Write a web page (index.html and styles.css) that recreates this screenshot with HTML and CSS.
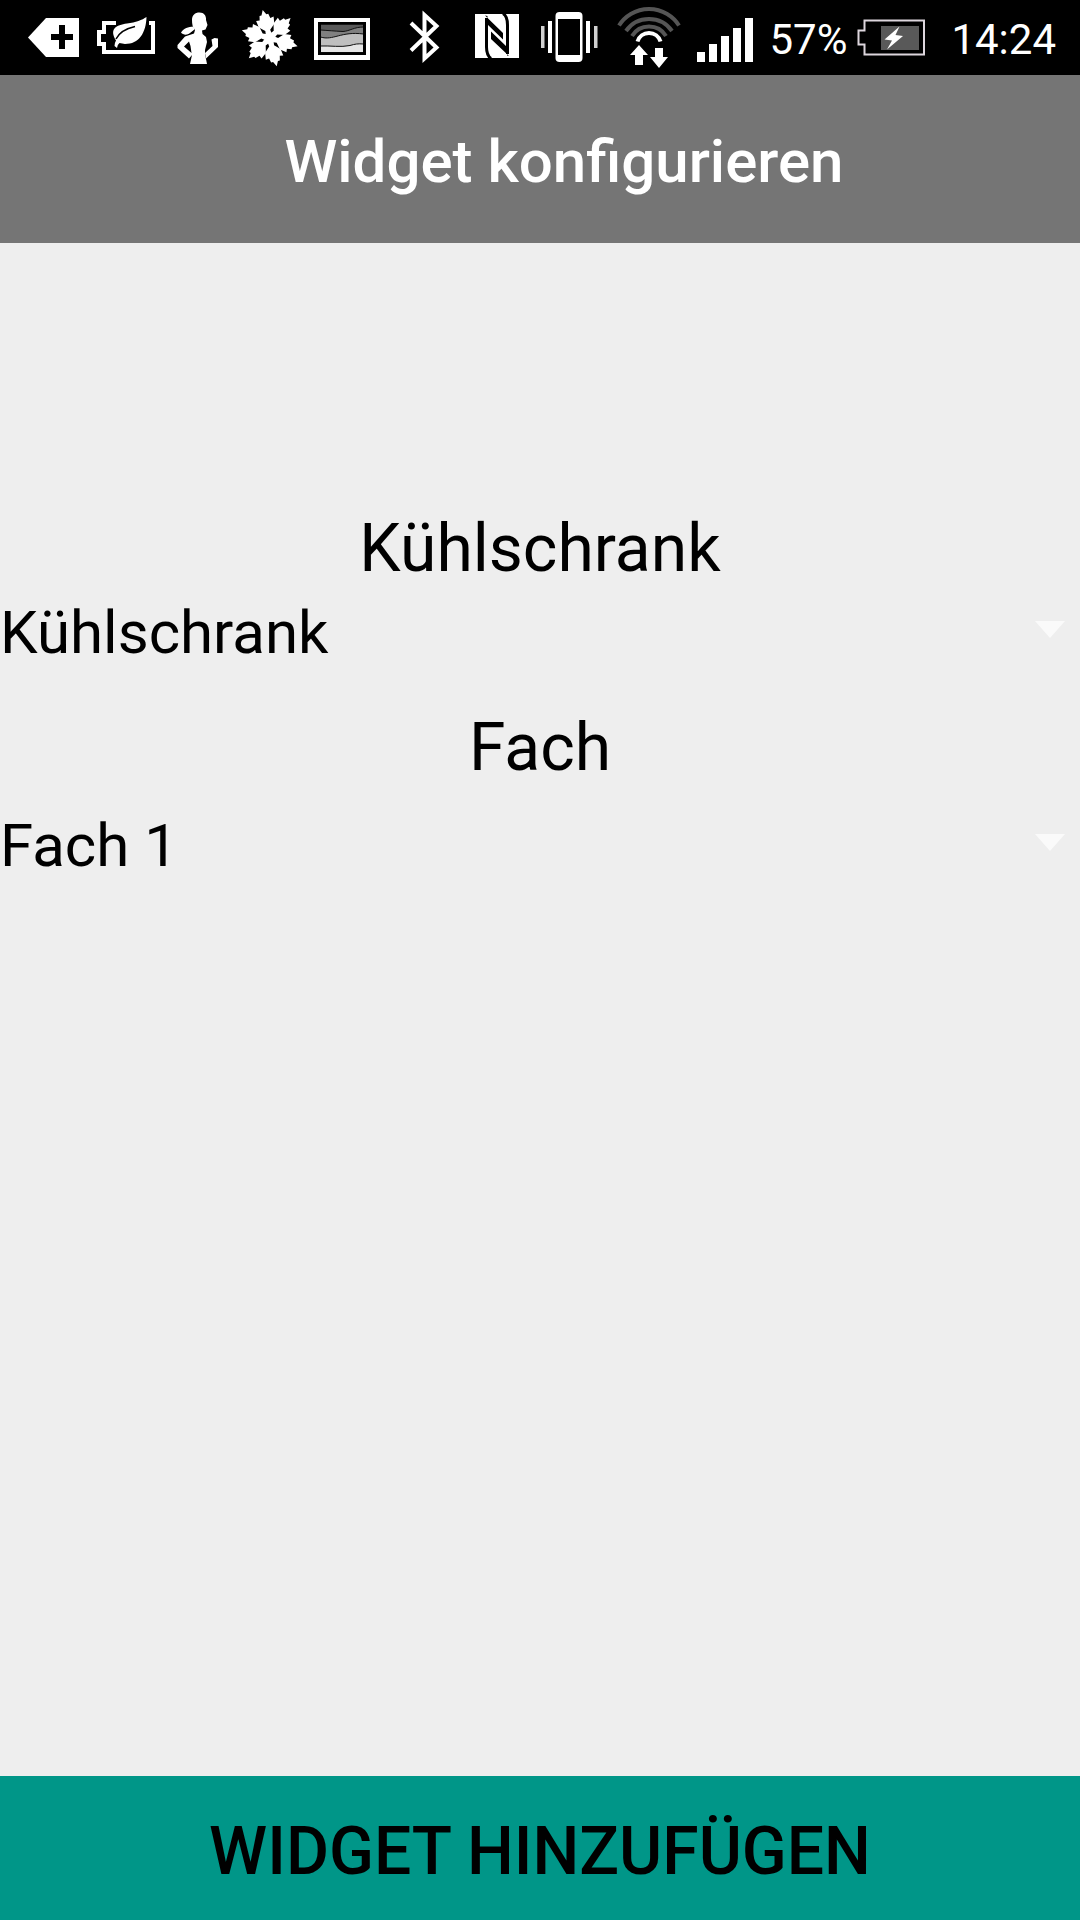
FILE: index.html
```html
<!DOCTYPE html>
<html lang="de">
<head>
<meta charset="utf-8">
<meta name="viewport" content="width=device-width, initial-scale=1">
<title>Widget konfigurieren</title>
<link rel="stylesheet" href="styles.css">
</head>
<body>
<div class="status-bar">
  <div class="status-group">
    <svg class="status-icon" viewBox="18 0 72 75" aria-hidden="true">
      <path fill="#fff" d="M28 37.5 46 18H79V57H46Z"/>
      <path fill="#000" d="M59 25h6v9h8v6h-8v9h-6v-9h-8v-6h8z"/>
    </svg>
    <svg class="status-icon" viewBox="90 0 72 75" aria-hidden="true">
      <path fill="none" stroke="#fff" stroke-width="4" d="M116 23H104V32H99V44H104V52H153V23H149"/>
      <path fill="#fff" d="M146.500 17C146 33 139 44 125 44L119.500 43Q117 45 117 48L114.500 46Q114.500 43 116 40.500C109 29 116 25 127 23.500C136 22.500 142 20 146.500 17Z"/>
      <path fill="none" stroke="#000" stroke-width="1.500" d="M116 39C119 33 124 29 135 26.500"/>
    </svg>
    <svg class="status-icon" viewBox="162 0 72 75" aria-hidden="true">
      <path fill="#fff" d="M192 20C192 15 195 12.500 199.500 12.500C204 12.500 206.500 16 206 20L207.500 25L205.500 29.500L202 30.500L202.500 34L206 37L207 42L205 50V54L207 64H190L192 55L189 58.500L177.500 48V45L185 36.500L194 33.500L195 30C192.500 27 192 24 192 20ZM189 41.500 184 46.500 191.500 53 190.500 46Z"/>
      <path fill="#fff" d="M193.500 26.500C188 27 184 28 181 32.500C183 35 187 35.500 190 33L194.500 29.500ZM205 53L212.500 46L211.500 39.500L214.500 38L218 38.500V47L206 58.500Z"/>
    </svg>
    <svg class="status-icon" viewBox="234 0 72 75" aria-hidden="true">
      <defs>
        <path id="arm" d="M-3.500 0-2.500-8-8-13-9-20-5.500-19.500-4.500-24-2.500-24 0-29 2.500-24 4.500-24 5.500-19.500 9-20 8-13 2.500-8 3.500 0Z"/>
      </defs>
      <g fill="#fff" transform="translate(269.700 38.200) rotate(-14)">
        <use href="#arm"/>
        <use href="#arm" transform="rotate(60)"/>
        <use href="#arm" transform="rotate(120)"/>
        <use href="#arm" transform="rotate(180)"/>
        <use href="#arm" transform="rotate(240)"/>
        <use href="#arm" transform="rotate(300)"/>
      </g>
    </svg>
    <svg class="status-icon" viewBox="306 0 72 75" aria-hidden="true">
      <path fill="#fff" d="M314 18H370V60H314Z"/>
      <path fill="#000" d="M318 22H366V55H318Z"/>
      <path fill="#595959" d="M320.500 24.500H363.500V52.500H320.500Z"/>
      <path fill="#808080" stroke="#111" d="M320.500 30C328 30.500 334 31 343 31.500C350 31 354 27 363.500 27V52.500H320.500Z"/>
      <path fill="#bfbfbf" stroke="#111" d="M320.500 37C333 41 341 31 363.500 34V52.500H320.500Z"/>
      <path fill="#e6e6e6" stroke="#111" d="M320.500 46C330 45.500 341 47.500 350 45.500C355 44 358 43.500 363.500 44V52.500H320.500Z"/>
      <path fill="none" stroke="#000" stroke-width="2" d="M320 23.500H364V53.500H320Z"/>
    </svg>
  </div>
  <div class="status-group">
    <svg class="status-icon" viewBox="387 0 72 75" aria-hidden="true">
      <path fill="none" stroke="#fff" stroke-width="4" d="M410 23 435.500 47.500 423.500 58.500V15L435.500 26 410 50.500"/>
    </svg>
    <svg class="status-icon" viewBox="459 0 72 75" aria-hidden="true">
      <path fill="#fff" d="M474 14H518V58H474Z"/>
      <path fill="#000" d="M484 15.500 502 33V39.500L486.500 24.500V16ZM490 31.500 506 47V55.500L508 56 490 39Z"/>
      <path fill="none" stroke="#000" stroke-width="3" d="M490 58.500C486.500 56 485.500 52 485.500 47V18M506.500 54V25C506.500 19 505.500 15.500 502 13.500"/>
    </svg>
    <svg class="status-icon" viewBox="531 0 72 75" aria-hidden="true">
      <rect x="554.500" y="12" width="27" height="50" rx="4" fill="#fff"/>
      <path fill="#000" d="M557 19H579V55H557Z"/>
      <path fill="#fff" d="M547 21h4v32h-4zM585 21h4v32h-4z"/>
      <path fill="#d0d0d0" d="M540 26h3.500v22h-3.500zM593 26h3.500v22h-3.500z"/>
    </svg>
    <svg class="status-icon status-icon-wide" viewBox="603 0 80 75" aria-hidden="true">
      <g fill="none" stroke-width="4">
        <path stroke="#555" d="M618 25.500A35.500 35.500 0 0 1 678 25.500M625 31A28 28 0 0 1 671 31M631 36A20 20 0 0 1 665 36"/>
        <path stroke="#fff" d="M636.500 41.500A12 12 0 0 1 659.500 41.500"/>
      </g>
      <path fill="#fff" d="M638 45 647 55H642V65H634V55H629ZM654 48H662V57H667L658 68 649 57H654Z"/>
    </svg>
    <svg class="status-icon status-icon-wide" viewBox="683 0 80 75" aria-hidden="true">
      <path fill="#fff" d="M696 52h8v10h-8zM708 44h8v18h-8zM720 36h8v26h-8zM732 28h8v34h-8zM744 18h8v44h-8z"/>
    </svg>
    <span class="battery-level">57%</span>
    <svg class="status-icon status-icon-wide" viewBox="852 0 80 75" aria-hidden="true">
      <path fill="none" stroke="#ddd6dd" stroke-width="2" d="M864.500 20.500H924V54.500H864.500V44.500H858.500V30.500H864.500Z"/>
      <path fill="#595959" d="M881 26H919V50H881Z"/>
      <path fill="#fff" d="M899.500 26.500 884.500 39.500 892 40.500 887 49.500 903 36 895.500 35Z"/>
    </svg>
    <time class="clock">14:24</time>
  </div>
</div>

<header class="app-bar">
  <h1 class="app-title">Widget konfigurieren</h1>
</header>

<form class="config-form">
  <div class="fields">
    <label class="field-label" for="fridge">Kühlschrank</label>
    <div class="spinner">
      <select class="spinner-select" id="fridge"><option>Kühlschrank</option></select>
      <svg class="spinner-arrow" viewBox="0 0 30 17" aria-hidden="true"><path fill="#fafafa" d="M0 0H30L15 17Z"/></svg>
    </div>
    <label class="field-label field-label-next" for="compartment">Fach</label>
    <div class="spinner spinner-spaced">
      <select class="spinner-select" id="compartment"><option>Fach 1</option></select>
      <svg class="spinner-arrow" viewBox="0 0 30 17" aria-hidden="true"><path fill="#fafafa" d="M0 0H30L15 17Z"/></svg>
    </div>
  </div>
  <button class="submit" type="button">WIDGET HINZUFÜGEN</button>
</form>
</body>
</html>
```
FILE: styles.css
```css
* {
  box-sizing: border-box;
}

body {
  display: flex;
  flex-direction: column;
  min-height: 100vh;
  margin: 0;
  background: #eee;
  color: #000;
  font-family: Roboto, "Liberation Sans", sans-serif;
}

.status-bar {
  display: flex;
  justify-content: space-between;
  padding: 0 24px 0 18px;
  background: #000;
  color: #fff;
  font-size: 42px;
  line-height: 79px;
}

.status-group {
  display: flex;
  height: 75px;
}

.status-icon {
  flex: none;
  width: 72px;
  height: 75px;
}

.status-icon-wide {
  width: 80px;
}

.battery-level {
  padding: 0 5px;
}

.clock {
  padding-left: 19px;
}

.app-bar {
  padding: 51px 0 45px 48px;
  background: #757575;
  color: #fff;
}

.app-title {
  margin: 0;
  font-size: 60px;
  font-weight: 500;
  line-height: 72px;
  text-align: center;
}

.config-form {
  display: flex;
  flex: 1;
  flex-direction: column;
}

.fields {
  display: flex;
  flex: 1;
  flex-direction: column;
  padding-top: 267px;
}

.field-label {
  font-size: 66px;
  line-height: 78px;
  text-align: center;
}

.field-label-next {
  margin-top: 33px;
}

.spinner {
  display: grid;
  align-items: center;
}

.spinner-spaced {
  margin-top: 14px;
}

.spinner-select,
.spinner-arrow {
  grid-area: 1 / 1;
}

.spinner-select {
  width: 100%;
  height: 88px;
  padding: 0;
  border: 0;
  appearance: none;
  background: transparent;
  color: #000;
  font: inherit;
  font-size: 60px;
}

.spinner-arrow {
  justify-self: end;
  width: 30px;
  height: 17px;
  margin: 0 15px 6px 0;
  pointer-events: none;
}

.submit {
  height: 144px;
  padding: 6px 0 0;
  border: 0;
  background: #009688;
  color: #000;
  font: inherit;
  font-size: 66px;
  font-weight: 500;
}
```
